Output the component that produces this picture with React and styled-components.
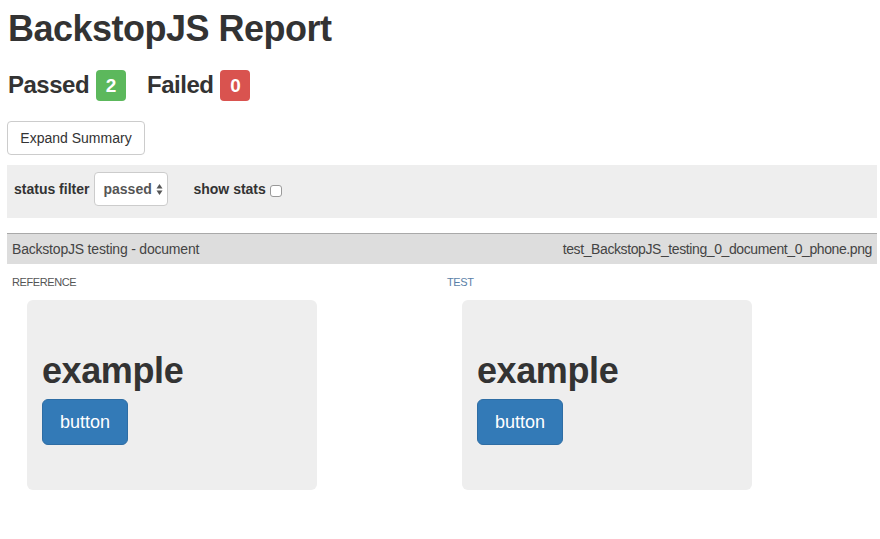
import React from "react";
import styled, { createGlobalStyle } from "styled-components";

const Global = createGlobalStyle`
  html, body { margin: 0; padding: 0; background: #fff; }
  body {
    font-family: "Liberation Sans", Arial, Helvetica, sans-serif;
    color: #333;
    font-size: 14px;
  }
  * { box-sizing: border-box; }
`;

const Page = styled.div`
  width: 880px;
  padding: 0 3px 0 7px;
`;

const Title = styled.h1`
  margin: 9px 0 0 1px;
  font-size: 36px;
  line-height: 40px;
  font-weight: 700;
  letter-spacing: -0.5px;
  color: #333;
`;

const Stats = styled.div`
  display: flex;
  align-items: center;
  margin: 21px 0 0 1px;
  height: 31px;
`;

const StatLabel = styled.span`
  font-size: 24px;
  font-weight: 700;
  letter-spacing: -0.5px;
  line-height: 31px;
  margin-top: -3px;
  margin-left: ${(p) => p.$ml || 0}px;
`;

const Badge = styled.span`
  display: inline-flex;
  align-items: center;
  justify-content: center;
  width: 30px;
  height: 31px;
  margin-left: 7px;
  border-radius: 4px;
  background: ${(p) => p.$bg};
  color: #fff;
  font-weight: 700;
  font-size: 19px;
`;

const Button = styled.button`
  display: block;
  margin-top: 20px;
  height: 34px;
  width: 138px;
  padding: 0 12px;
  background: #fff;
  border: 1px solid #ccc;
  border-radius: 4px;
  font-family: inherit;
  font-size: 14px;
  color: #333;
`;

const FilterBar = styled.div`
  margin-top: 10px;
  height: 53px;
  background: #eee;
  display: flex;
  align-items: flex-start;
  padding: 7px 7px;
`;

const FilterLabel = styled.span`
  font-weight: 700;
  font-size: 14px;
  line-height: 34px;
  margin-left: ${(p) => p.$ml || 0}px;
`;

const Select = styled.div`
  margin-left: 5px;
  width: 74px;
  height: 34px;
  border: 1px solid #ccc;
  border-radius: 4px;
  background: #fff;
  display: flex;
  align-items: center;
  padding-left: 8px;
  font-weight: 700;
  font-size: 14px;
  color: #555;
  position: relative;
`;

const Arrows = styled.svg`
  position: absolute;
  right: 4px;
  top: 10px;
`;

const Checkbox = styled.span`
  display: inline-block;
  width: 12px;
  height: 12px;
  margin: 13px 0 0 4px;
  border: 1px solid #999;
  border-radius: 3px;
  background: #fff;
`;

const Scenario = styled.div`
  margin-top: 15px;
`;

const ScenarioHeader = styled.div`
  display: flex;
  justify-content: space-between;
  align-items: center;
  height: 31px;
  border-top: 1px solid #a9a9a9;
  background: #ddd;
  padding: 0 5px;
  font-size: 14px;
  color: #444;
`;

const HeaderText = styled.span`
  letter-spacing: ${(p) => p.$ls}px;
`;

const Columns = styled.div`
  display: grid;
  grid-template-columns: 435px 435px;
`;

const Column = styled.div`
  padding: 0;
`;

const ColLabel = styled.div`
  margin: 12px 0 0 5px;
  font-size: 11px;
  line-height: 12px;
  color: ${(p) => p.$color};
  letter-spacing: -0.4px;
`;

const Shot = styled.div`
  margin: 12px 0 0 20px;
  width: 290px;
  height: 190px;
  background: #eee;
  border-radius: 6px;
  padding: 51px 15px 0;
`;

const ShotTitle = styled.h1`
  margin: 0 0 8px;
  font-size: 36px;
  line-height: 40px;
  font-weight: 700;
  letter-spacing: -0.4px;
  color: #333;
`;

const PrimaryButton = styled.button`
  display: block;
  width: 86px;
  height: 46px;
  background: #337ab7;
  border: 1px solid #2e6da4;
  border-radius: 6px;
  color: #fff;
  font-family: inherit;
  font-size: 18px;
  padding: 0;
`;

function ScreenshotPanel({ label, color }) {
  return (
    <Column>
      <ColLabel $color={color}>{label}</ColLabel>
      <Shot>
        <ShotTitle>example</ShotTitle>
        <PrimaryButton>button</PrimaryButton>
      </Shot>
    </Column>
  );
}

export default function App() {
  return (
    <>
      <Global />
      <Page>
        <Title>BackstopJS Report</Title>
        <Stats>
          <StatLabel>Passed</StatLabel>
          <Badge $bg="#5cb85c">2</Badge>
          <StatLabel $ml={21}>Failed</StatLabel>
          <Badge $bg="#d9534f">0</Badge>
        </Stats>
        <Button>Expand Summary</Button>
        <FilterBar>
          <FilterLabel>status filter</FilterLabel>
          <Select>
            passed
            <Arrows width="7" height="13" viewBox="0 0 7 13">
              <path d="M3.5 1 L6.5 5.5 L0.5 5.5 Z" fill="#555" />
              <path d="M3.5 12 L6.5 7.5 L0.5 7.5 Z" fill="#555" />
            </Arrows>
          </Select>
          <FilterLabel $ml={25}>show stats</FilterLabel>
          <Checkbox />
        </FilterBar>
        <Scenario>
          <ScenarioHeader>
            <HeaderText $ls={-0.2}>BackstopJS testing - document</HeaderText>
            <HeaderText $ls={-0.4}>test_BackstopJS_testing_0_document_0_phone.png</HeaderText>
          </ScenarioHeader>
          <Columns>
            <ScreenshotPanel label="REFERENCE" color="#555" />
            <ScreenshotPanel label="TEST" color="#5b7fa8" />
          </Columns>
        </Scenario>
      </Page>
    </>
  );
}
